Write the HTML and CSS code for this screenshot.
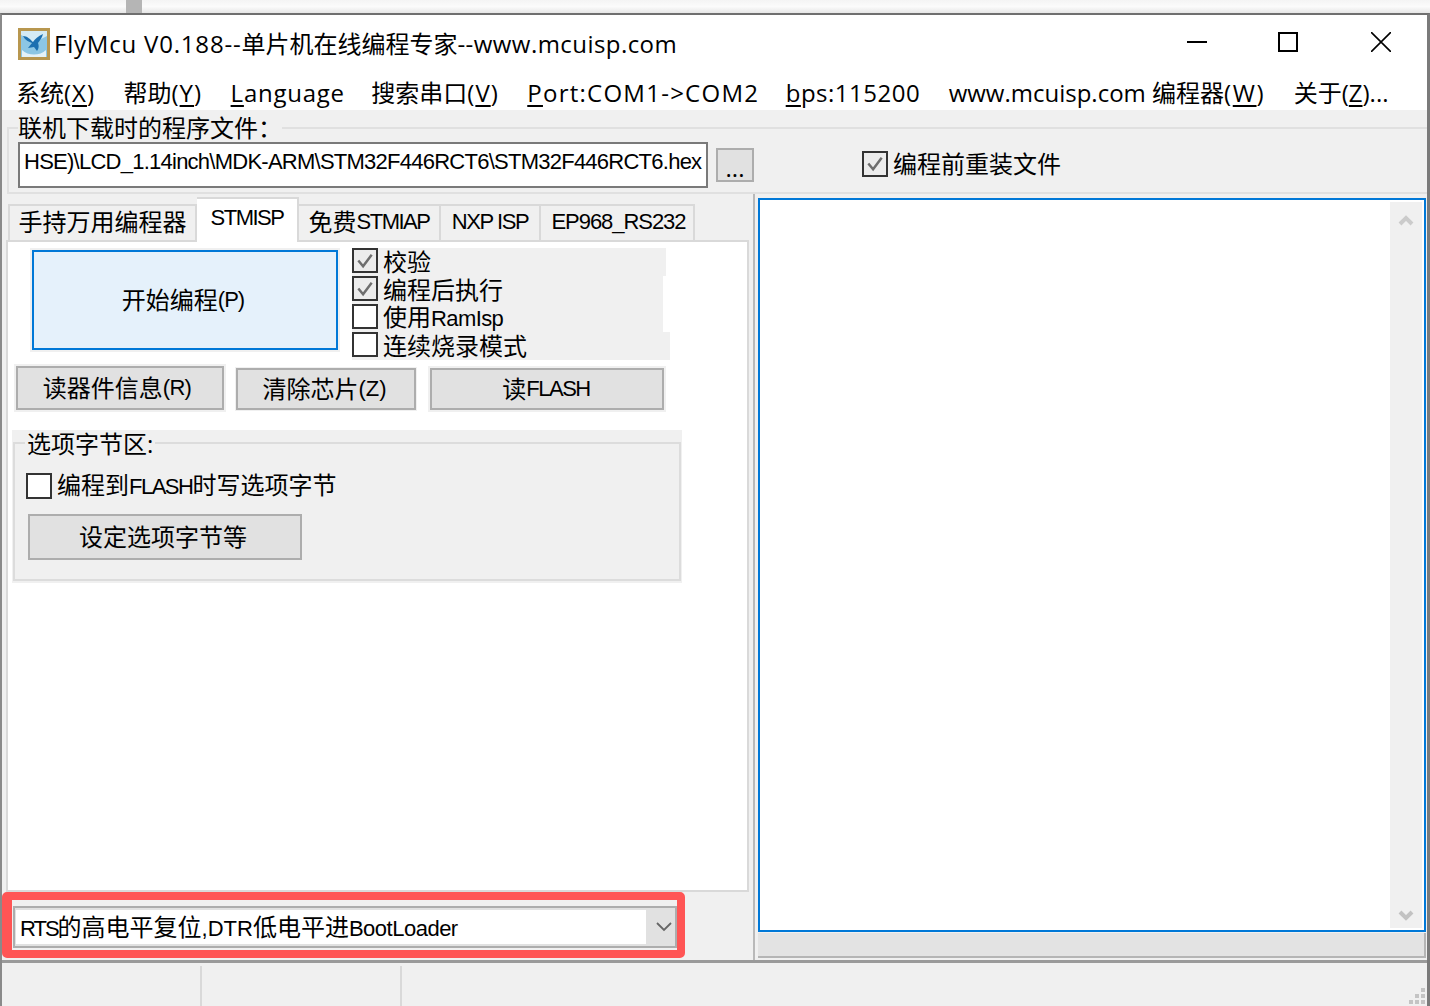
FILE: index.html
```html
<!DOCTYPE html>
<html lang="zh-CN">
<head>
<meta charset="utf-8">
<title>FlyMcu</title>
<link rel="stylesheet" href="styles.css">
</head>
<body>
<div class="desk"><div class="desk-thumb"></div></div>
<div class="window">
  <div class="titlebar">
    <svg class="logo" viewBox="0 0 32 32" width="32" height="32">
      <rect width="32" height="32" fill="#b8974f"/>
      <rect x="3" y="3" width="26" height="26" fill="#8cc6e4"/>
      <path d="M3 3h26v5l-6 3-3 3-4 2-5-5-8-4z" fill="#d4ebf5"/>
      <path d="M5 8c4 0 7 3 10 6 2-3 5-6 10-8-1 4-3 6-5 9 1 3 1 5-1 8l-3-4-6 1 4-5C11 14 7 12 5 8z" fill="#1b6fb0"/>
      <path d="M4 22c6 6 18 6 24 0v7H4z" fill="#e4f2f8"/>
    </svg>
    <span class="title-text"><span class="sp-a">FlyMcu V0.188--</span>单片机在线编程专家<span class="sp-b">--www.mcuisp.com</span></span>
    <div class="win-controls">
      <svg class="ctl" viewBox="0 0 20 20" width="20" height="20"><path d="M0 10h20" stroke="#000" stroke-width="2"/></svg>
      <svg class="ctl" viewBox="0 0 20 20" width="20" height="20"><rect x="1" y="1" width="18" height="18" fill="none" stroke="#000" stroke-width="2"/></svg>
      <svg class="ctl ctl-close" viewBox="0 0 20 20" width="20" height="20"><path d="M0 0l20 20M20 0L0 20" stroke="#000" stroke-width="1.6"/></svg>
    </div>
  </div>
  <nav class="menu">
    <span class="mi">系统<span class="mk">(<u>X</u>)</span></span>
    <span class="mi">帮助<span class="mk">(<u>Y</u>)</span></span>
    <span class="mi sp-lang"><u>L</u>anguage</span>
    <span class="mi m-search">搜索串口<span class="mk">(<u>V</u>)</span></span>
    <span class="mi sp-port"><u>P</u>ort:COM1-&gt;COM2</span>
    <span class="mi sp-bps"><u>b</u>ps:115200</span>
    <span class="mi">www.mcuisp.com 编程器<span class="mk-w">(<u>W</u>)</span></span>
    <span class="mi">关于(<u>Z</u>)...</span>
  </nav>
  <div class="filebar">
    <div class="filegroup">
      <span class="file-legend">联机下载时的程序文件：</span>
      <div class="fileinput">HSE)\LCD_1.14inch\MDK-ARM\STM32F446RCT6\STM32F446RCT6.hex</div>
      <div class="btn browse">...</div>
      <label class="check reload"><span class="box on"><svg viewBox="0 0 22 22" width="22" height="21"><path d="M4 11l5 6 9-12" fill="none" stroke="#6e6e6e" stroke-width="2.6"/></svg></span><span>编程前重装文件</span></label>
    </div>
  </div>
  <div class="main">
    <div class="left">
      <div class="tabs">
        <div class="tab t1">手持万用编程器</div>
        <div class="tab t2 active nar">STMISP</div>
        <div class="tab t3">免费<span class="nar ls-tab">STMIAP</span></div>
        <div class="tab t4 nar">NXP ISP</div>
        <div class="tab t5 nar">EP968_RS232</div>
      </div>
      <div class="panel">
        <div class="row-top">
          <div class="start">开始编程<span class="nar ls-p">(P)</span></div>
          <div class="checks">
            <label class="check c-row w1"><span class="box on"><svg viewBox="0 0 22 22" width="22" height="21"><path d="M4 11l5 6 9-12" fill="none" stroke="#6e6e6e" stroke-width="2.6"/></svg></span><span>校验</span></label>
            <label class="check c-row w2"><span class="box on"><svg viewBox="0 0 22 22" width="22" height="21"><path d="M4 11l5 6 9-12" fill="none" stroke="#6e6e6e" stroke-width="2.6"/></svg></span><span>编程后执行</span></label>
            <label class="check c-row w2"><span class="box"></span><span>使用<span class="nar ls-ram">RamIsp</span></span></label>
            <label class="check c-row w3"><span class="box"></span><span>连续烧录模式</span></label>
          </div>
        </div>
        <div class="row-btns">
          <div class="btn b1">读器件信息<span class="nar ls-r">(R)</span></div>
          <div class="btn b2">清除芯片<span class="nar ls-z">(Z)</span></div>
          <div class="btn b3">读<span class="nar ls-flash">FLASH</span></div>
        </div>
        <div class="optgroup">
          <div class="optframe">
            <span class="opt-legend">选项字节区:</span>
            <label class="check opt-check"><span class="box"></span><span>编程到<span class="nar ls-flash">FLASH</span>时写选项字节</span></label>
            <div class="btn b4">设定选项字节等</div>
          </div>
        </div>
      </div>
      <div class="bottom">
        <div class="highlight">
          <div class="combo">
            <div class="combo-field"><span class="nar ls-rts">RTS</span>的高电平复位<span class="nar ls-z">,DTR</span>低电平进<span class="nar ls-boot">BootLoader</span></div>
            <svg class="combo-arrow" viewBox="0 0 16 10" width="16" height="10"><path d="M1 1l7 7 7-7" fill="none" stroke="#666" stroke-width="1.8"/></svg>
          </div>
        </div>
      </div>
    </div>
    <div class="right">
      <div class="log">
        <div class="vscroll">
          <svg viewBox="0 0 16 12" width="16" height="12"><path d="M2 10l6-6 6 6" fill="none" stroke="#cbcbcb" stroke-width="4"/></svg>
          <svg viewBox="0 0 16 12" width="16" height="12"><path d="M2 2l6 6 6-6" fill="none" stroke="#c2c2c2" stroke-width="4"/></svg>
        </div>
      </div>
      <div class="hscroll"></div>
    </div>
  </div>
  <div class="status">
    <div class="cell c1"></div>
    <div class="cell c2"></div>
    <svg class="grip" viewBox="0 0 16 16" width="16" height="16"><g fill="#c4c4c4"><rect x="12" y="0" width="4" height="4"/><rect x="6" y="6" width="4" height="4"/><rect x="12" y="6" width="4" height="4"/><rect x="0" y="12" width="4" height="4"/><rect x="6" y="12" width="4" height="4"/><rect x="12" y="12" width="4" height="4"/></g></svg>
  </div>
</div>
</body>
</html>
```
FILE: styles.css
```css
* { box-sizing: border-box; }
html, body { margin: 0; padding: 0; }
body {
  width: 1430px;
  height: 1006px;
  overflow: hidden;
  background: #fff;
  color: #000;
  font: 24px/28px "Open Sans", "Noto Sans CJK SC", sans-serif;
  display: flex;
  flex-direction: column;
}
.nar {
  font-family: "Liberation Sans", "Noto Sans CJK SC", sans-serif;
  font-size: 22px;
  letter-spacing: -1.25px;
}
.ls-tab { letter-spacing: -1.5px; }
.ls-p { letter-spacing: -1px; }
.ls-ram { letter-spacing: -0.6px; }
.ls-r { letter-spacing: -0.7px; }
.ls-z { letter-spacing: 0; }
.ls-flash { letter-spacing: -1.5px; }
.ls-rts { letter-spacing: -2px; }
.ls-boot { letter-spacing: -0.5px; }
.sp-a { letter-spacing: 0.8px; }
.sp-b { letter-spacing: 0.44px; }
.sp-lang { letter-spacing: 0.75px; }
.sp-port { letter-spacing: 1.25px; margin-right: -2px; }
.sp-bps { letter-spacing: 0.5px; }
.mk { letter-spacing: 1px; }
.mk-w { letter-spacing: 1.6px; }
u { text-underline-offset: 3px; text-decoration-thickness: 2px; }

.desk {
  height: 13px;
  flex: none;
  background: linear-gradient(#f4f4f4, #fbfbfb 50%, #e6e6e6);
  padding-left: 126px;
}
.desk-thumb { width: 16px; height: 13px; background: #b5b5b5; }

.window {
  flex: 1;
  display: flex;
  flex-direction: column;
  border-top: 2px solid #6f6f6f;
  border-left: 2px solid #8a8a8a;
  border-right: 3px solid #7a7a7a;
  background: #f0f0f0;
  min-height: 0;
}

.titlebar {
  height: 58px;
  flex: none;
  background: #fff;
  display: flex;
  align-items: center;
  padding-left: 16px;
}
.logo { flex: none; margin-right: 4px; }
.title-text { white-space: nowrap; }
.win-controls {
  margin-left: auto;
  display: flex;
  gap: 71px;
  padding: 0 36px 4px 0;
  align-items: center;
}
.ctl { display: block; }
.ctl-close { margin-left: 2px; }

.menu {
  height: 37px;
  flex: none;
  background: #fff;
  display: flex;
  gap: 28.5px;
  padding: 6px 0 0 14px;
  white-space: nowrap;
}
.mi { display: block; }
.m-search { margin-left: -2px; }

.filebar { height: 84px; flex: none; padding-top: 17px; }
.filegroup {
  position: relative;
  height: 67px;
  margin-left: 5px;
  border: 2px solid #e0e0e0;
  border-width: 2px 0 2px 2px;
  display: flex;
  align-items: center;
  padding: 8px 0 0 9px;
}
.file-legend {
  position: absolute;
  left: 9px;
  top: -15px;
  background: #f0f0f0;
}
.fileinput {
  width: 690px;
  height: 46px;
  flex: none;
  background: #fff;
  border: 2px solid #7a7a7a;
  padding: 4px 5px 0 4px;
  white-space: nowrap;
  overflow: hidden;
  font-family: "Liberation Sans", sans-serif;
  font-size: 22px;
  letter-spacing: -0.75px;
  text-align: right;
}
.btn {
  background: #e1e1e1;
  border: 2px solid #adadad;
  display: flex;
  align-items: center;
  justify-content: center;
  flex: none;
  white-space: nowrap;
}
.browse { width: 38px; height: 34px; margin-left: 8px; padding-top: 6px; }
.check { display: flex; align-items: center; gap: 5px; white-space: nowrap; }
.box {
  width: 26px;
  height: 26px;
  flex: none;
  border: 2px solid #333;
  background: #fff;
  display: block;
}
.box.on { background: #ececec; }
.box svg { display: block; }
.reload { margin: 0 0 2px 108px; }

.main { flex: 1; display: flex; min-height: 0; }
.left {
  width: 753px;
  flex: none;
  display: flex;
  flex-direction: column;
  padding-top: 3px;
  border-right: 2px solid #b9b9b9;
}
.tabs { height: 43px; flex: none; display: flex; align-items: flex-end; padding-left: 6px; position: relative; z-index: 1; }
.tab {
  height: 36px;
  border: 2px solid #d9d9d9;
  border-bottom: 0;
  border-left: 0;
  background: #f0f0f0;
  display: flex;
  align-items: center;
  justify-content: center;
  white-space: nowrap;
  padding-bottom: 2px;
}
.t1 { width: 189px; border-left: 2px solid #d9d9d9; }
.t2 { width: 102px; letter-spacing: -1.5px; }
.t3 { width: 142px; }
.t4 { width: 100px; letter-spacing: -1.45px; }
.t5 { width: 154px; letter-spacing: -1.05px; padding-left: 3px; }
.tab.active { height: 45px; margin-bottom: -2px; background: #fff; padding-bottom: 5px; border-right: 2px solid #d9d9d9; }

.panel {
  height: 652px;
  flex: none;
  width: 743px;
  margin-left: 4px;
  background: #fff;
  border: 2px solid #d9d9d9;
  padding-top: 6px;
  display: flex;
  flex-direction: column;
}
.row-top { display: flex; height: 112px; flex: none; padding-left: 24px; }
.start {
  width: 306px;
  height: 100px;
  margin-top: 2px;
  flex: none;
  background: #e5f1fb;
  border: 2px solid #0078d7;
  box-shadow: 0 0 0 2px #f0f0f0;
  display: flex;
  align-items: center;
  justify-content: center;
  padding-right: 4px;
}
.checks { margin-left: 14px; display: flex; flex-direction: column; }
.c-row { height: 28px; background: #f0f0f0; }
.c-row .box { height: 25px; align-self: flex-start; }
.w1 { width: 314px; }
.w2 { width: 311px; }
.w3 { width: 318px; }

.row-btns {
  display: flex;
  align-items: flex-end;
  height: 52px;
  flex: none;
  padding: 0 0 2px 8px;
}
.b1 { width: 208px; height: 44px; padding-right: 6px; box-shadow: 0 0 0 2px #f0f0f0; }
.b2 { width: 180px; height: 42px; margin-left: 12px; padding-right: 3px; box-shadow: 0 0 0 1px #f0f0f0; }
.b3 { width: 234px; height: 42px; margin-left: 14px; padding-right: 2px; box-shadow: 0 0 0 2px #f0f0f0; }

.optgroup {
  width: 670px;
  height: 153px;
  margin: 18px 0 0 4px;
  flex: none;
  background: #f0f0f0;
  padding: 12px 1px 2px;
}
.optframe {
  position: relative;
  height: 139px;
  border: 2px solid #dcdcdc;
  padding: 27px 0 0 11px;
}
.opt-legend {
  position: absolute;
  left: 10px;
  top: -14px;
  background: #f0f0f0;
  padding: 0 2px;
}
.opt-check .box { height: 26px; }
.b4 { width: 274px; height: 46px; margin: 13px 0 0 2px; padding-right: 4px; }

.bottom { flex: 1; min-height: 0; }
.highlight {
  width: 683px;
  height: 66px;
  border: solid #ff5555;
  border-width: 8px 8px 8px 10px;
  border-radius: 5px;
  padding: 6px 0 0 1px;
}
.combo {
  height: 42px;
  border: 2px solid #adadad;
  background: #e1e1e1;
  display: flex;
  align-items: center;
  padding: 0 0 0 1px;
}
.combo-field {
  width: 630px;
  height: 34px;
  flex: none;
  background: #fff;
  padding-left: 4px;
  line-height: 34px;
  white-space: nowrap;
}
.combo-arrow { margin-left: 10px; }

.right {
  flex: 1;
  display: flex;
  flex-direction: column;
  padding: 4px 1px 2px 3px;
}
.log {
  height: 734px;
  flex: none;
  background: #fff;
  border: 2px solid #0078d7;
  display: flex;
  justify-content: flex-end;
  padding: 2px 2px 2px 0;
}
.vscroll {
  width: 32px;
  background: #f0f0f0;
  display: flex;
  flex-direction: column;
  justify-content: space-between;
  align-items: center;
  padding: 12px 0 6px;
}
.hscroll {
  flex: 1;
  margin-top: 1px;
  background: #e3e3e3;
  border: solid #b5b5b5;
  border-width: 0 2px 2px 0;
}

.status {
  height: 46px;
  flex: none;
  border-top: 3px solid #9a9a9a;
  display: flex;
  position: relative;
  padding-top: 3px;
}
.cell { border-right: 2px solid #d9d9d9; }
.c1 { width: 200px; }
.c2 { width: 200px; }
.grip { position: absolute; right: 2px; bottom: 2px; }
```
